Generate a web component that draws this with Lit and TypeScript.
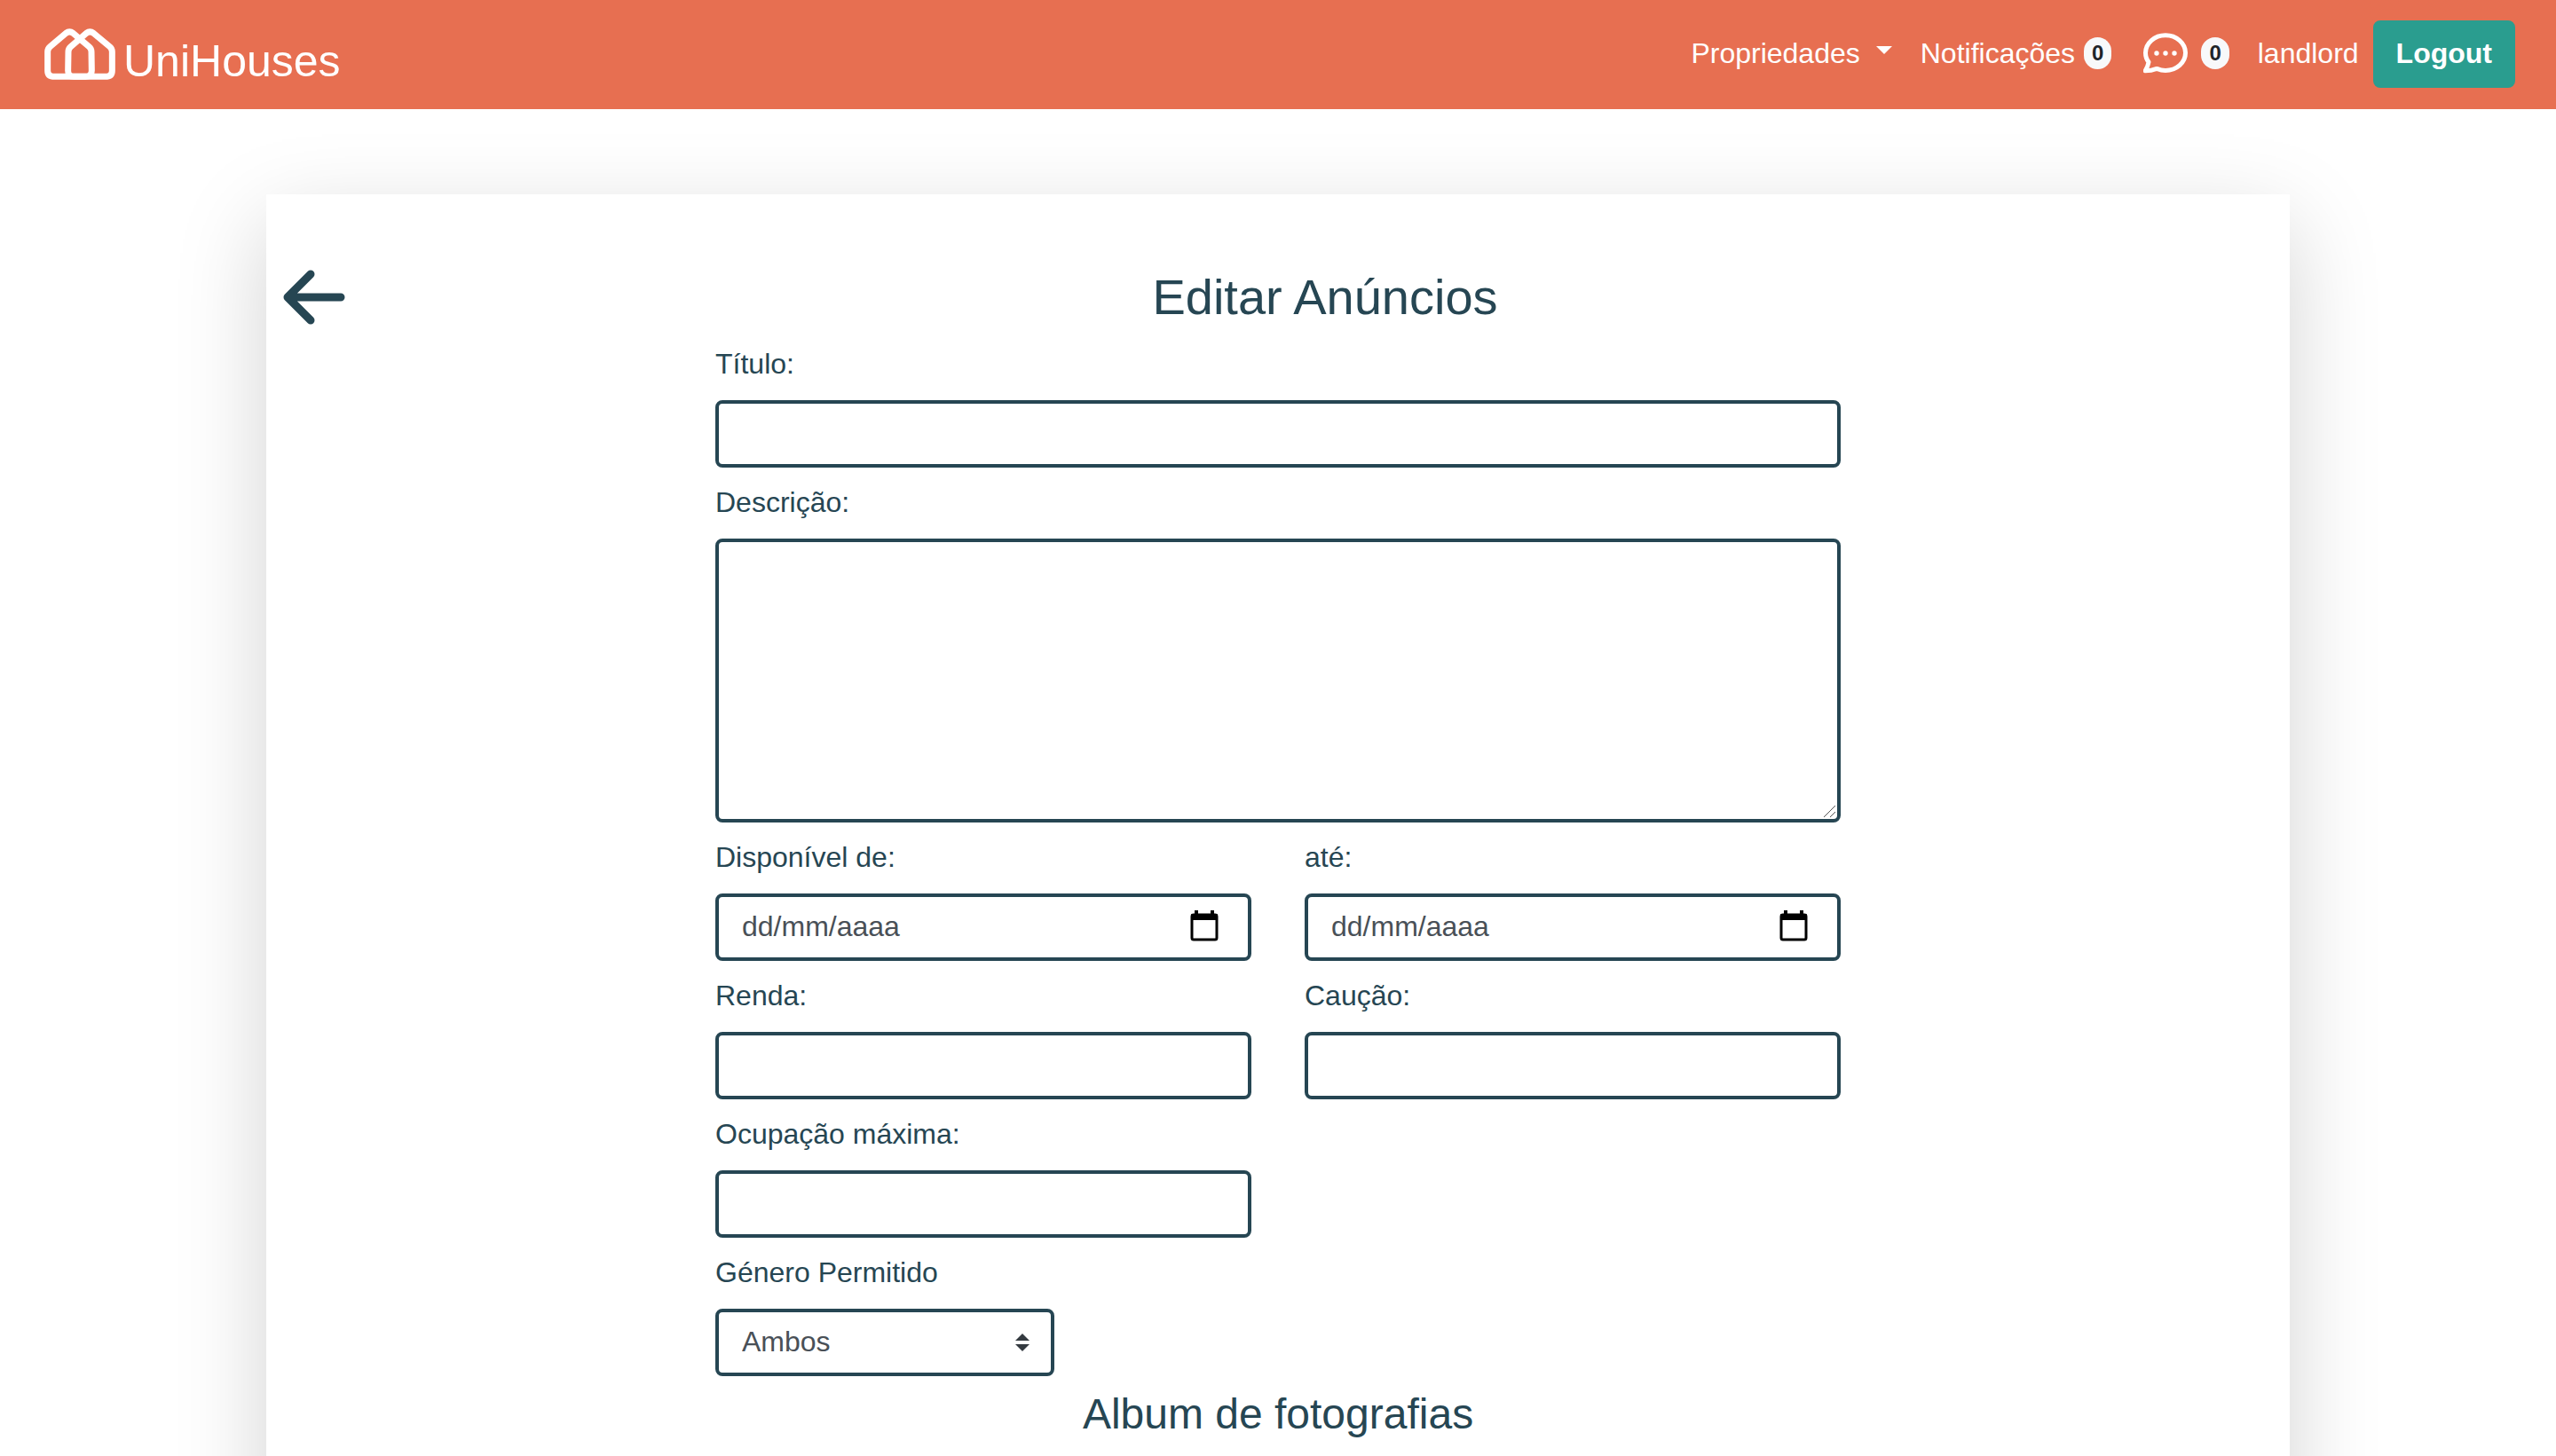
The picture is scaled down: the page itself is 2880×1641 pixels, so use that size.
import { LitElement, html, css, svg } from "lit";
import { customElement, property } from "lit/decorators.js";

const calendarIcon = svg`
  <rect x="1" y="5" width="28" height="28" rx="2" fill="none" stroke="#000" stroke-width="3"></rect>
  <rect x="0" y="4" width="30" height="7" rx="1" fill="#000"></rect>
  <rect x="4" y="0" width="4" height="6" fill="#000"></rect>
  <rect x="22" y="0" width="4" height="6" fill="#000"></rect>
`;

@customElement("site-header")
export class SiteHeader extends LitElement {
  static styles = css`
    :host {
      display: block;
      font-size: 32px;
      line-height: 48px;
      color: #fff;
    }
    .bar {
      display: flex;
      justify-content: space-between;
      align-items: flex-start;
      background: #e76f51;
      padding: 23px 46px 24px 50px;
    }
    a {
      color: inherit;
      text-decoration: none;
    }
    .brand {
      display: flex;
      align-items: flex-start;
      gap: 9px;
      padding-top: 9px;
      font-size: 50px;
      line-height: 58px;
    }
    .brand-name {
      padding-top: 8px;
    }
    .logo {
      display: block;
      width: 80px;
      height: 58px;
    }
    .nav {
      display: flex;
      align-items: center;
      gap: 32px;
    }
    .menu {
      display: flex;
      align-items: center;
      gap: 18px;
      padding: 0;
      border: 0;
      background: none;
      color: inherit;
      font: inherit;
      cursor: pointer;
    }
    .caret {
      border: 9px solid transparent;
      border-top-color: #fff;
      border-bottom: 0;
      margin-bottom: 8px;
    }
    .item {
      display: flex;
      align-items: center;
      gap: 10px;
    }
    .menu,
    .item,
    .user {
      padding-bottom: 2px;
    }
    .chat {
      gap: 15px;
      padding-left: 4px;
    }
    .chat-icon {
      display: block;
      width: 50px;
      height: 46px;
    }
    .badge {
      padding: 6px 9px;
      border-radius: 18px;
      background: #f8f9fa;
      color: #212529;
      font-size: 24px;
      font-weight: 700;
      line-height: 24px;
    }
    .session {
      display: flex;
      align-items: center;
      gap: 16px;
    }
    .logout {
      padding: 11px 24px 13px;
      border: 2px solid #2a9d8f;
      border-radius: 8px;
      background: #2a9d8f;
      color: #fff;
      font: inherit;
      font-weight: 700;
      cursor: pointer;
    }
  `;

  render() {
    return html`
      <header class="bar">
        <a class="brand" href="#">
          <svg class="logo" viewBox="150 95 240 174" fill="none" stroke="#fff" stroke-width="21" stroke-linejoin="round" aria-hidden="true">
            <path d="M185 258 Q161 258 161 238 V174 Q161 164 169 157 L223 111 Q235 102 247 111 L301 157 Q309 164 309 174 L310 238 Q310 258 290 258 Z"></path>
            <path d="M250 258 Q230 258 230 238 L231 174 Q231 164 239 157 L292 111 Q304 102 316 111 L371 157 Q379 164 379 174 V238 Q379 258 355 258 Z"></path>
          </svg>
          <span class="brand-name">UniHouses</span>
        </a>
        <nav class="nav">
          <button class="menu" type="button" aria-haspopup="true">Propriedades<span class="caret"></span></button>
          <a class="item" href="#">Notificações<span class="badge">0</span></a>
          <a class="item chat" href="#" aria-label="Mensagens">
            <svg class="chat-icon" viewBox="0 0 50 46" aria-hidden="true">
              <path
                d="M15.2 40.4C18.2 41.6 21.5 42.5 25 42.5C37.4 42.5 47.5 33.6 47.5 22.6S37.4 2.7 25 2.7S2.5 11.6 2.5 22.6C2.5 27 3.6 30.2 6 33C5.4 37 3.6 40.2 2.2 42.8C7 42.8 11.5 41.8 15.2 40.4Z"
                fill="none" stroke="#fff" stroke-width="5" stroke-linejoin="round"></path>
              <circle cx="15" cy="23" r="2.7" fill="#fff"></circle>
              <circle cx="25" cy="23" r="2.7" fill="#fff"></circle>
              <circle cx="35" cy="23" r="2.7" fill="#fff"></circle>
            </svg>
            <span class="badge">0</span>
          </a>
          <div class="session">
            <a class="user" href="#">landlord</a>
            <button class="logout" type="button">Logout</button>
          </div>
        </nav>
      </header>
    `;
  }
}

@customElement("form-field")
export class FormField extends LitElement {
  static styles = css`
    :host {
      display: block;
    }
    .label {
      display: block;
      margin-bottom: 18px;
      line-height: 46px;
    }
    .control {
      display: block;
      box-sizing: border-box;
      width: 100%;
      height: 76px;
      margin: 0;
      padding: 9px 26px 11px;
      border: 4px solid #264653;
      border-radius: 8px;
      background: #fff;
      color: #495057;
      font: inherit;
      outline: none;
    }
    .control::placeholder {
      color: #495057;
      opacity: 1;
    }
    .area {
      height: 320px;
      resize: vertical;
    }
    .area::-webkit-resizer {
      background: url("data:image/svg+xml,%3csvg xmlns='http://www.w3.org/2000/svg' viewBox='0 0 15 15'%3e%3cpath fill='none' stroke='%23555' d='M0 13L13 0M7 13L13 7'/%3e%3c/svg%3e")
        no-repeat;
    }
    .select {
      width: calc(30% + 2px);
      appearance: none;
      background: #fff
        url("data:image/svg+xml,%3csvg xmlns='http://www.w3.org/2000/svg' viewBox='0 0 4 5'%3e%3cpath fill='%23343a40' d='M2 0L0 2h4zm0 5L0 3h4z'/%3e%3c/svg%3e")
        no-repeat right 24px center / 16px 20px;
    }
    .date {
      position: relative;
    }
    .picker {
      position: absolute;
      top: 13px;
      right: 33px;
      padding: 0;
      border: 0;
      background: none;
      cursor: pointer;
    }
    .picker-icon {
      display: block;
      width: 40px;
      height: 46px;
    }
  `;

  @property() label = "";
  @property() kind = "text";

  private control() {
    switch (this.kind) {
      case "area":
        return html`<textarea id="control" class="control area"></textarea>`;
      case "select":
        return html`<select id="control" class="control select">
          <option>Ambos</option>
          <option>Masculino</option>
          <option>Feminino</option>
        </select>`;
      case "date":
        return html`<div class="date">
          <input id="control" class="control" type="text" inputmode="numeric" placeholder="dd/mm/aaaa" />
          <button class="picker" type="button" aria-label="Abrir calendário">
            <svg class="picker-icon" viewBox="-5 -6 40 46" aria-hidden="true">${calendarIcon}</svg>
          </button>
        </div>`;
      default:
        return html`<input id="control" class="control" type="text" />`;
    }
  }

  render() {
    return html`<label class="label" for="control">${this.label}</label>${this.control()}`;
  }
}

@customElement("app-root")
export class AppRoot extends LitElement {
  static styles = css`
    :host {
      display: block;
      height: 100vh;
      overflow-y: auto;
      scrollbar-width: none;
      background: #fff;
      color: #264653;
      font-family: "Liberation Sans", Arial, sans-serif;
      font-size: 32px;
      line-height: 48px;
    }
    .card {
      box-sizing: border-box;
      max-width: 2280px;
      margin: 96px auto;
      padding: 82px 0 96px;
      background: #fff;
      box-shadow: 0 32px 96px rgba(0, 0, 0, 0.175);
    }
    .heading {
      display: flex;
      align-items: center;
      margin-bottom: 18px;
    }
    .back {
      padding: 0 16px 0 18px;
    }
    .back-icon {
      display: block;
      width: 72px;
      height: 62px;
    }
    .title,
    .subtitle {
      margin: 0;
      font-weight: 400;
      text-align: center;
    }
    .title {
      flex: 1;
      font-size: 56px;
      line-height: 68px;
    }
    .subtitle {
      grid-column: 1 / -1;
      font-size: 48px;
      line-height: 54px;
    }
    .form {
      display: grid;
      grid-template-columns: 1fr 1fr;
      gap: 16px 60px;
      width: calc(700% / 12 - 62px);
      margin: 0 auto;
    }
    .wide {
      grid-column: 1 / -1;
    }
    .first {
      grid-column: 1;
    }
  `;

  render() {
    return html`
      <site-header></site-header>
      <main class="card">
        <div class="heading">
          <a class="back" href="#" aria-label="Voltar">
            <svg class="back-icon" viewBox="0 0 72 62" fill="none" stroke="#264653" stroke-width="9" stroke-linecap="round" stroke-linejoin="round" aria-hidden="true">
              <path d="M66 31H6M32 5L6 31L32 57"></path>
            </svg>
          </a>
          <h1 class="title">Editar Anúncios</h1>
        </div>
        <form class="form">
          <form-field class="wide" label="Título:"></form-field>
          <form-field class="wide" label="Descrição:" kind="area"></form-field>
          <form-field label="Disponível de:" kind="date"></form-field>
          <form-field label="até:" kind="date"></form-field>
          <form-field label="Renda:"></form-field>
          <form-field label="Caução:"></form-field>
          <form-field class="first" label="Ocupação máxima:"></form-field>
          <form-field class="wide" label="Género Permitido" kind="select"></form-field>
          <h2 class="subtitle">Album de fotografias</h2>
        </form>
      </main>
    `;
  }
}
